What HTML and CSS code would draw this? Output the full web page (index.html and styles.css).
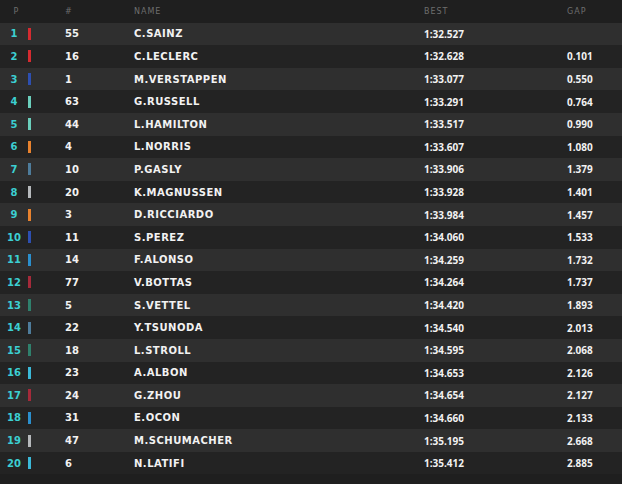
FILE: index.html
```html
<!DOCTYPE html>
<html>
<head>
<meta charset="utf-8">
<link rel="stylesheet" href="styles.css">
</head>
<body>
<div class="board">
  <div class="row head">
    <div class="pos hp">P</div><div></div><div>#</div><div>NAME</div><div>BEST</div><div>GAP</div>
  </div>
  <div class="row odd"><div class="pos">1</div><div><span class="bar ferrari"></span></div><div class="num">55</div><div class="name">C.SAINZ</div><div class="time">1:32.527</div><div class="time"></div></div>
  <div class="row"><div class="pos">2</div><div><span class="bar ferrari"></span></div><div class="num">16</div><div class="name">C.LECLERC</div><div class="time">1:32.628</div><div class="time">0.101</div></div>
  <div class="row odd"><div class="pos">3</div><div><span class="bar redbull"></span></div><div class="num">1</div><div class="name">M.VERSTAPPEN</div><div class="time">1:33.077</div><div class="time">0.550</div></div>
  <div class="row"><div class="pos">4</div><div><span class="bar merc"></span></div><div class="num">63</div><div class="name">G.RUSSELL</div><div class="time">1:33.291</div><div class="time">0.764</div></div>
  <div class="row odd"><div class="pos">5</div><div><span class="bar merc"></span></div><div class="num">44</div><div class="name">L.HAMILTON</div><div class="time">1:33.517</div><div class="time">0.990</div></div>
  <div class="row"><div class="pos">6</div><div><span class="bar mclaren"></span></div><div class="num">4</div><div class="name">L.NORRIS</div><div class="time">1:33.607</div><div class="time">1.080</div></div>
  <div class="row odd"><div class="pos">7</div><div><span class="bar alphatauri"></span></div><div class="num">10</div><div class="name">P.GASLY</div><div class="time">1:33.906</div><div class="time">1.379</div></div>
  <div class="row"><div class="pos">8</div><div><span class="bar haas"></span></div><div class="num">20</div><div class="name">K.MAGNUSSEN</div><div class="time">1:33.928</div><div class="time">1.401</div></div>
  <div class="row odd"><div class="pos">9</div><div><span class="bar mclaren"></span></div><div class="num">3</div><div class="name">D.RICCIARDO</div><div class="time">1:33.984</div><div class="time">1.457</div></div>
  <div class="row"><div class="pos">10</div><div><span class="bar redbull"></span></div><div class="num">11</div><div class="name">S.PEREZ</div><div class="time">1:34.060</div><div class="time">1.533</div></div>
  <div class="row odd"><div class="pos">11</div><div><span class="bar alpine"></span></div><div class="num">14</div><div class="name">F.ALONSO</div><div class="time">1:34.259</div><div class="time">1.732</div></div>
  <div class="row"><div class="pos">12</div><div><span class="bar alfa"></span></div><div class="num">77</div><div class="name">V.BOTTAS</div><div class="time">1:34.264</div><div class="time">1.737</div></div>
  <div class="row odd"><div class="pos">13</div><div><span class="bar aston"></span></div><div class="num">5</div><div class="name">S.VETTEL</div><div class="time">1:34.420</div><div class="time">1.893</div></div>
  <div class="row"><div class="pos">14</div><div><span class="bar alphatauri"></span></div><div class="num">22</div><div class="name">Y.TSUNODA</div><div class="time">1:34.540</div><div class="time">2.013</div></div>
  <div class="row odd"><div class="pos">15</div><div><span class="bar aston"></span></div><div class="num">18</div><div class="name">L.STROLL</div><div class="time">1:34.595</div><div class="time">2.068</div></div>
  <div class="row"><div class="pos">16</div><div><span class="bar williams"></span></div><div class="num">23</div><div class="name">A.ALBON</div><div class="time">1:34.653</div><div class="time">2.126</div></div>
  <div class="row odd"><div class="pos">17</div><div><span class="bar alfa"></span></div><div class="num">24</div><div class="name">G.ZHOU</div><div class="time">1:34.654</div><div class="time">2.127</div></div>
  <div class="row"><div class="pos">18</div><div><span class="bar alpine"></span></div><div class="num">31</div><div class="name">E.OCON</div><div class="time">1:34.660</div><div class="time">2.133</div></div>
  <div class="row odd"><div class="pos">19</div><div><span class="bar haas"></span></div><div class="num">47</div><div class="name">M.SCHUMACHER</div><div class="time">1:35.195</div><div class="time">2.668</div></div>
  <div class="row"><div class="pos">20</div><div><span class="bar williams"></span></div><div class="num">6</div><div class="name">N.LATIFI</div><div class="time">1:35.412</div><div class="time">2.885</div></div>
</div>
</body>
</html>
```
FILE: styles.css
```css
html, body {
  margin: 0;
  padding: 0;
  background: #1f1f1f;
}
.board {
  width: 622px;
  font-family: "DejaVu Sans", sans-serif;
  font-weight: bold;
  font-size: 10px;
  color: #f2f2f2;
}
.row {
  display: grid;
  grid-template-columns: 28px 37px 69px 290px 143px 1fr;
  align-items: center;
  height: 22.6px;
  background: #232323;
}
.row.odd {
  background: #2f2f2f;
}
.row.head {
  background: #1f1f1f;
  color: #6e6e6e;
  font-weight: normal;
  font-size: 8px;
  letter-spacing: 1px;
}
.head .hp {
  padding-left: 5px;
}
.pos {
  text-align: center;
  color: #3ccfd2;
}
.head .pos {
  color: #6e6e6e;
}
.name {
  letter-spacing: 0.5px;
}
.time {
  font-family: "Open Sans", sans-serif;
  font-weight: bold;
  font-size: 10px;
}
.bar {
  display: block;
  width: 3px;
  height: 12px;
}
.ferrari { background: #d52b30; }
.redbull { background: #2d4fb0; }
.merc { background: #6bcfbc; }
.mclaren { background: #e8822e; }
.alphatauri { background: #4e7c9b; }
.haas { background: #b6b9bc; }
.alpine { background: #2b8fcd; }
.alfa { background: #a52a3a; }
.aston { background: #2f806c; }
.williams { background: #3bb9d8; }
```
